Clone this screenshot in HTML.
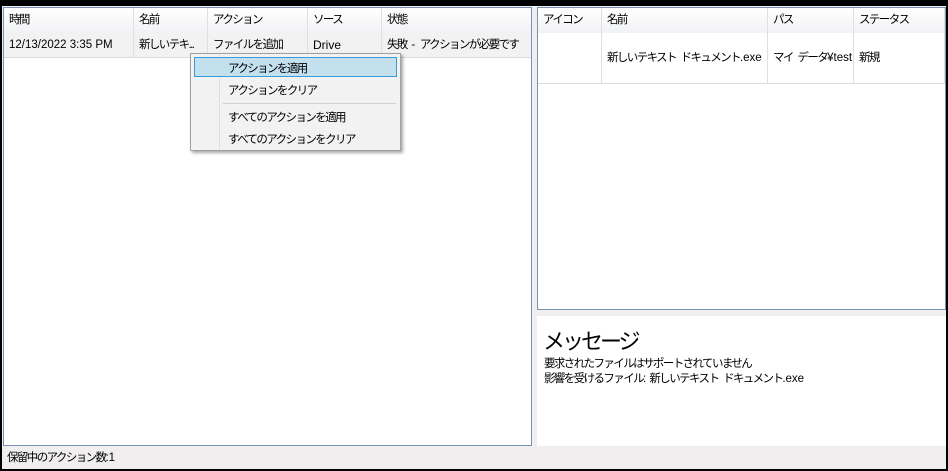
<!DOCTYPE html>
<html><head><meta charset="utf-8"><style>
body{margin:0;width:948px;height:471px;background:#000;position:relative;overflow:hidden;font-family:"Liberation Sans","Noto Sans CJK JP",sans-serif;font-size:12px;color:#000}
.j{font-size:11.5px;letter-spacing:-1.6px;word-spacing:3px}
.j b{font-weight:normal;letter-spacing:0;word-spacing:0}
.win{position:absolute;left:2px;top:6px;width:944px;height:463px;background:#f0eeee}
.box{position:absolute;background:#fff;border:1px solid #7a92b4;box-sizing:border-box}
.hdr{position:absolute;top:0;height:25px;background:linear-gradient(#fff,#f1f2f4);border-bottom:1px solid #e0e0e0;left:0;right:0}
.c{position:absolute;top:0;height:100%;border-right:1px solid #e0e0e0;box-sizing:border-box;padding-left:5px;line-height:25px;white-space:nowrap;overflow:hidden}
.row{position:absolute;left:0;right:0;background:#f2f2f2;border-bottom:1px solid #dcdcdc}
.menu{position:absolute;left:190px;top:53px;width:211px;height:98px;background:#f2f2f2;border:1px solid #a0a0a0;box-shadow:2px 2px 3px rgba(0,0,0,.35);box-sizing:border-box}
.mi{position:absolute;left:37px}
</style></head><body>
<div class="win">
 <div class="box" style="left:1px;top:1px;width:529px;height:439px">
  <div class="hdr j">
   <div class="c" style="left:0;width:130px">時間</div>
   <div class="c" style="left:130px;width:74px">名前</div>
   <div class="c" style="left:204px;width:100px">アクション</div>
   <div class="c" style="left:304px;width:74px">ソース</div>
   <div class="c" style="left:378px;width:151px;border-right:none">状態</div>
  </div>
  <div class="row j" style="top:25px;height:24px">
   <div class="c" style="left:0;width:130px;line-height:24px;font-size:11.5px;letter-spacing:0;word-spacing:0">12/13/2022 3:35 PM</div>
   <div class="c" style="left:130px;width:74px;line-height:24px">新しいテキ...</div>
   <div class="c" style="left:204px;width:100px;line-height:24px">ファイルを追加</div>
   <div class="c" style="left:304px;width:74px;line-height:24px;font-size:12px;letter-spacing:0">Drive</div>
   <div class="c" style="left:378px;width:151px;line-height:24px;border-right:none">失敗 <b>-</b> アクションが必要です</div>
  </div>
 </div>
 <div class="box" style="left:535px;top:1px;width:409px;height:303px">
  <div class="hdr j">
   <div class="c" style="left:0;width:64px">アイコン</div>
   <div class="c" style="left:64px;width:166px">名前</div>
   <div class="c" style="left:230px;width:86px">パス</div>
   <div class="c" style="left:316px;width:91px">ステータス</div>
  </div>
  <div class="row j" style="top:25px;height:50px;background:#fff">
   <div class="c" style="left:0;width:64px;line-height:50px"></div>
   <div class="c" style="left:64px;width:166px;line-height:50px">新しいテキスト ドキュメント<b>.exe</b></div>
   <div class="c" style="left:230px;width:86px;line-height:50px">マイ データ<b>¥test</b></div>
   <div class="c" style="left:316px;width:91px;line-height:50px">新規</div>
  </div>
 </div>
 <div style="position:absolute;left:535px;top:310px;width:409px;height:130px;background:#fff">
  <div style="position:absolute;left:6px;top:8px;font-size:22px;letter-spacing:-3px">メッセージ</div>
  <div class="j" style="position:absolute;left:7px;top:41px;line-height:15px">要求されたファイルはサポートされていません<br>影響を受けるファイル<b>: </b>新しいテキスト ドキュメント<b>.exe</b></div>
 </div>
 <div class="j" style="position:absolute;left:5px;top:444px;line-height:16px">保留中のアクション数<b>:1</b></div>
</div>
<div class="menu j">
 <div style="position:absolute;left:28px;top:0;bottom:0;border-left:1px solid #e0e0e0"></div>
 <div style="position:absolute;left:3px;top:3px;width:203px;height:20px;background:#c3e0ef;border:1px solid #3d9ad8;box-sizing:border-box"></div>
 <div class="mi" style="top:6px">アクションを適用</div>
 <div class="mi" style="top:28px">アクションをクリア</div>
 <div style="position:absolute;left:32px;right:4px;top:49px;border-top:1px solid #d0d0d0"></div>
 <div class="mi" style="top:55px">すべてのアクションを適用</div>
 <div class="mi" style="top:77px">すべてのアクションをクリア</div>
</div>
</body></html>
